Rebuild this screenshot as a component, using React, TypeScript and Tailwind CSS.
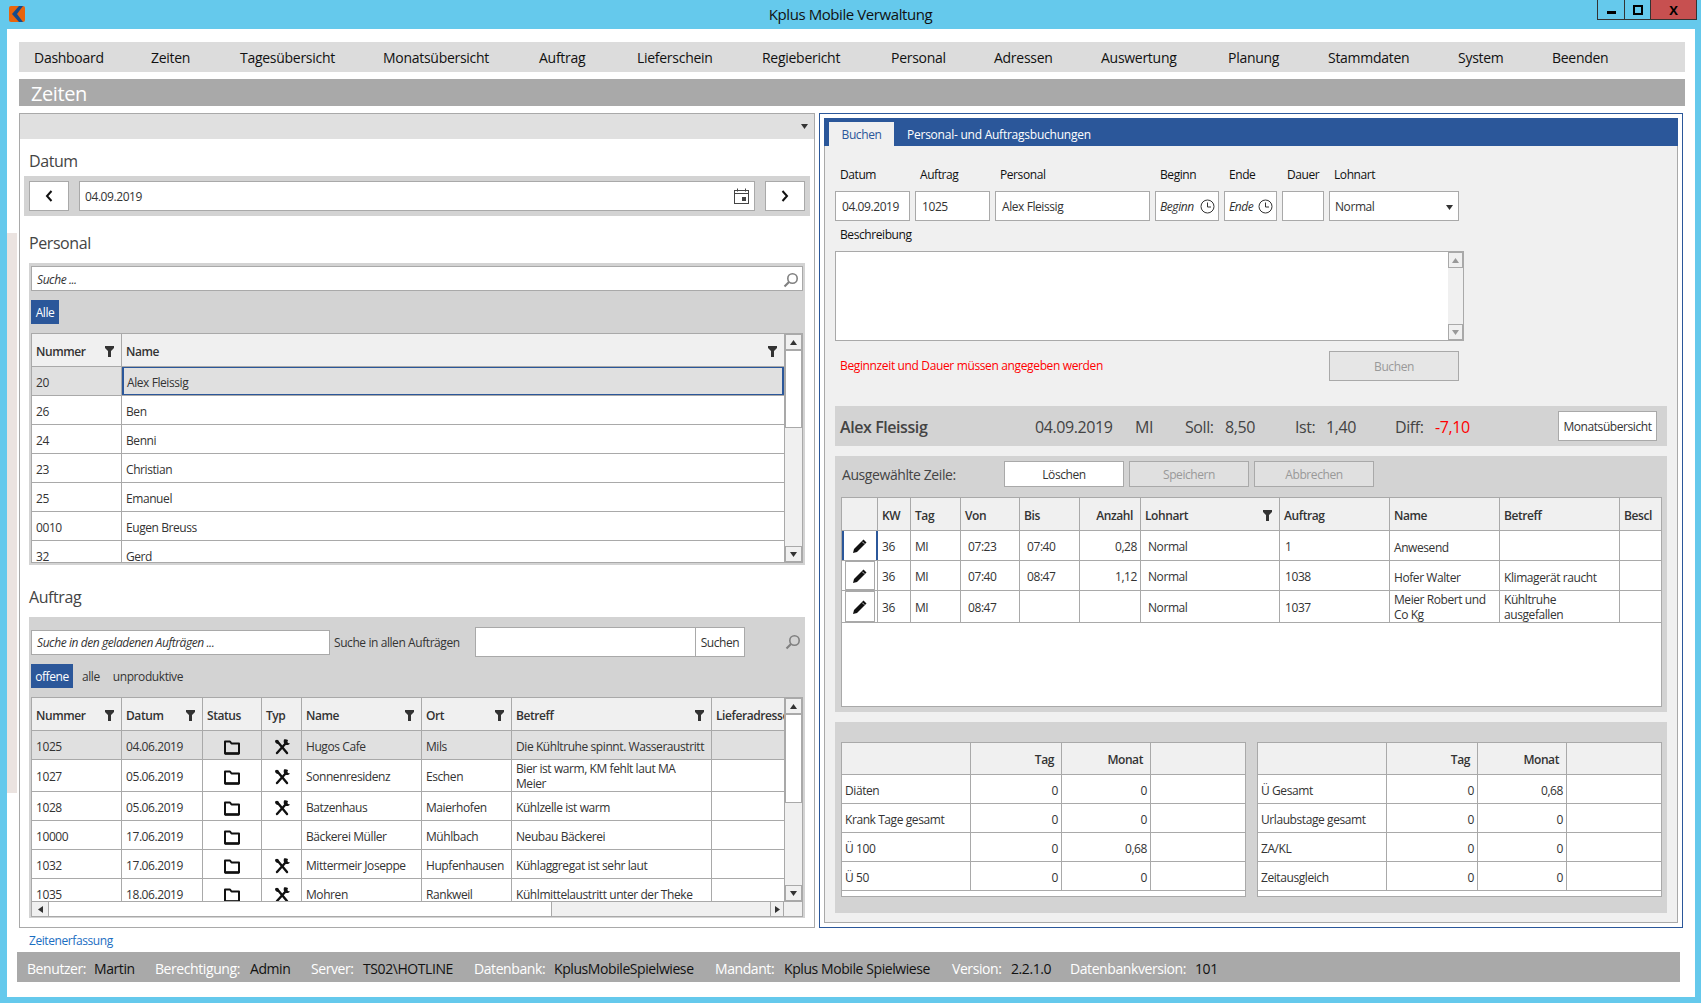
import React from 'react';

const FilterIcon = () => (
  <svg width="9" height="11" viewBox="0 0 9 11" className="shrink-0 text-[#333]">
    <path d="M0 0h9v2L6 5v6H3V5L0 2z" fill="currentColor" />
  </svg>
);

const FolderIcon = () => (
  <svg width="18" height="16" viewBox="0 0 18 16" fill="none">
    <path d="M2 14.5V2.500h5l1.500 2H16v10z" stroke="#111" strokeWidth="2" strokeLinejoin="round" />
    <path d="M2 14.500h14" stroke="#111" strokeWidth="2.400" />
  </svg>
);

const ToolsIcon = () => (
  <svg width="18" height="18" viewBox="0 0 18 18" fill="none">
    <path d="M4 3l10 12" stroke="#111" strokeWidth="2.400" strokeLinecap="round" />
    <path d="M2.500 2l3 .5.5 3-2 .5-2-2z" fill="#111" />
    <path d="M13 5L4 15" stroke="#111" strokeWidth="2.400" strokeLinecap="round" />
    <path d="M11 1.500c-.7 2-.3 3.700 1 5 1.700 1 3.500.7 5-1l-2-.5-.6-.9.6-2.100c-1.500-.7-2.800-1.100-4-.5z" fill="#111" />
  </svg>
);

const PencilIcon = () => (
  <svg width="16" height="16" viewBox="0 0 16 16">
    <path d="M11.500 1.500l3 3L5 14l-4 1 1-4z" fill="#111" />
    <path d="M10.300 3.700l2 2" stroke="#fff" strokeWidth="0.800" />
  </svg>
);

const SearchIcon = () => (
  <svg width="16" height="16" viewBox="0 0 16 16" fill="none" stroke="#808080">
    <circle cx="9.500" cy="6.500" r="4.700" strokeWidth="1.600" />
    <path d="M6 10l-4.500 4.500" strokeWidth="2.200" />
  </svg>
);

const ClockIcon = () => (
  <svg width="15" height="15" viewBox="0 0 15 15" fill="none" stroke="#333" className="shrink-0 -mt-[2px]">
    <circle cx="7.500" cy="7.500" r="6.500" />
    <path d="M7.500 3.500v4.500h3.500" />
  </svg>
);

const CalendarIcon = () => (
  <svg width="15" height="16" viewBox="0 0 15 16" fill="none" stroke="#444" className="-mt-[2px]">
    <rect x="0.500" y="2.500" width="14" height="13" />
    <path d="M0.500 5.500h14M3.500 0.500v3M11.500 0.500v3" />
    <rect x="8" y="9" width="4" height="4" fill="#444" stroke="none" />
  </svg>
);

const Chevron = ({ left }: { left?: boolean }) => (
  <svg width="8" height="12" viewBox="0 0 8 12" fill="none" stroke="#111" strokeWidth="2" className="-mt-[2px]">
    <path d={left ? 'M6.500 1L2 6l4.500 5' : 'M1.500 1L6 6l-4.500 5'} />
  </svg>
);

const Logo = () => (
  <svg width="16" height="16" viewBox="0 0 16 16">
    <rect width="16" height="16" rx="2" fill="#e8640c" />
    <path d="M10 0h4L8 8l6 8h-4L3 8z" fill="#144b8c" />
  </svg>
);

const Arrow = ({ dir, color = '#333' }: { dir: 'up' | 'down' | 'left' | 'right'; color?: string }) => {
  const d = { up: 'M3.500 1L7 6H0z', down: 'M3.500 6L7 1H0z', left: 'M1 3.500L6 0v7z', right: 'M6 3.500L1 0v7z' }[dir];
  return (
    <svg width="7" height="7" viewBox="0 0 7 7">
      <path d={d} fill={color} />
    </svg>
  );
};

const ScrollBtn = ({ dir, color }: { dir: 'up' | 'down' | 'left' | 'right'; color?: string }) => (
  <div className="flex items-center justify-center bg-[#f0f0f0] border border-[#a9a9a9] w-full h-[16px] shrink-0">
    <Arrow dir={dir} color={color} />
  </div>
);

// vertical scrollbar, the thumb sits after a fixed spacer
const VScroll = ({ thumb }: { thumb: string }) => (
  <div className="w-[18px] shrink-0 flex flex-col bg-[#f0f0f0] border-l border-[#a9a9a9]">
    <ScrollBtn dir="up" />
    <div className={`${thumb} bg-white border border-[#a9a9a9] shrink-0`} />
    <div className="flex-1" />
    <ScrollBtn dir="down" />
  </div>
);

type HeadCell = { t: string; filter?: boolean; right?: boolean };

const GridHead = ({ cols, head, h }: { cols: string; head: HeadCell[]; h: string }) => (
  <div className={`grid ${cols} ${h} shrink-0 bg-[#f0f0f0] border-b border-[#a9a9a9] font-semibold text-[#333]`}>
    {head.map((c, i) => (
      <div
        key={i}
        className={`flex items-center overflow-hidden whitespace-nowrap border-r border-[#a9a9a9] last:border-r-0 pl-[4px] pr-[7px] pt-[3px] ${c.right ? 'justify-end' : 'justify-between'}`}
      >
        <span>{c.t}</span>
        {c.filter && <FilterIcon />}
      </div>
    ))}
  </div>
);

const Input = ({ className = '', children }: { className?: string; children?: React.ReactNode }) => (
  <div className={`bg-white border border-[#a9a9a9] flex items-center pt-[2px] ${className}`}>{children}</div>
);

const Btn = ({ className, children }: { className: string; children: React.ReactNode }) => (
  <div className={`border border-[#a9a9a9] flex items-center justify-center pt-[2px] ${className}`}>{children}</div>
);

// flush: no text offset, for cells that hold two lines
const Cell = ({ className = '', flush, children }: { className?: string; flush?: boolean; children?: React.ReactNode }) => (
  <div className={`flex items-center border-r border-[#a9a9a9] last:border-r-0 overflow-hidden ${flush ? '' : 'pt-[3px]'} ${className}`}>{children}</div>
);

const menu = ['Dashboard', 'Zeiten', 'Tagesübersicht', 'Monatsübersicht', 'Auftrag', 'Lieferschein', 'Regiebericht', 'Personal', 'Adressen', 'Auswertung', 'Planung', 'Stammdaten', 'System', 'Beenden'];

const personal = [
  ['20', 'Alex Fleissig'],
  ['26', 'Ben'],
  ['24', 'Benni'],
  ['23', 'Christian'],
  ['25', 'Emanuel'],
  ['0010', 'Eugen Breuss'],
  ['32', 'Gerd'],
];

const auftraege = [
  { nr: '1025', d: '04.06.2019', tool: true, name: 'Hugos Cafe', ort: 'Mils', b: 'Die Kühltruhe spinnt. Wasseraustritt', h: 'h-[29px]' },
  { nr: '1027', d: '05.06.2019', tool: true, name: 'Sonnenresidenz', ort: 'Eschen', b: 'Bier ist warm, KM fehlt laut MA\nMeier', h: 'h-[32px]' },
  { nr: '1028', d: '05.06.2019', tool: true, name: 'Batzenhaus', ort: 'Maierhofen', b: 'Kühlzelle ist warm', h: 'h-[29px]' },
  { nr: '10000', d: '17.06.2019', tool: false, name: 'Bäckerei Müller', ort: 'Mühlbach', b: 'Neubau Bäckerei', h: 'h-[29px]' },
  { nr: '1032', d: '17.06.2019', tool: true, name: 'Mittermeir Joseppe', ort: 'Hupfenhausen', b: 'Kühlaggregat ist sehr laut', h: 'h-[29px]' },
  { nr: '1035', d: '18.06.2019', tool: true, name: 'Mohren', ort: 'Rankweil', b: 'Kühlmittelaustritt unter der Theke', h: 'h-[29px]' },
];

const buchungen = [
  { von: '07:23', bis: '07:40', anz: '0,28', a: '1', name: 'Anwesend', b: '', h: 'h-[30px]' },
  { von: '07:40', bis: '08:47', anz: '1,12', a: '1038', name: 'Hofer Walter', b: 'Klimagerät raucht', h: 'h-[30px]' },
  { von: '08:47', bis: '', anz: '', a: '1037', name: 'Meier Robert und Co Kg', b: 'Kühltruhe ausgefallen', h: 'h-[32px]' },
];

const statsLeft = [['Diäten', '0', '0'], ['Krank Tage gesamt', '0', '0'], ['Ü 100', '0', '0,68'], ['Ü 50', '0', '0']];
const statsRight = [['Ü Gesamt', '0', '0,68'], ['Urlaubstage gesamt', '0', '0'], ['ZA/KL', '0', '0'], ['Zeitausgleich', '0', '0']];

const status = [
  ['Benutzer:', 'Martin'],
  ['Berechtigung:', 'Admin'],
  ['Server:', 'TS02\\HOTLINE'],
  ['Datenbank:', 'KplusMobileSpielwiese'],
  ['Mandant:', 'Kplus Mobile Spielwiese'],
  ['Version:', '2.2.1.0'],
  ['Datenbankversion:', '101'],
];

const StatsTable = ({ rows }: { rows: string[][] }) => {
  const cols = 'grid-cols-[129px_91px_89px_1fr]';
  return (
    <div className="w-[405px] h-[155px] bg-white border border-[#a9a9a9] flex flex-col">
      <GridHead
        cols={cols}
        h="h-[32px]"
        head={[{ t: '' }, { t: 'Tag', right: true }, { t: 'Monat', right: true }, { t: '' }]}
      />
      {rows.map((r) => (
        <div key={r[0]} className={`grid ${cols} h-[29px] shrink-0 border-b border-[#a9a9a9]`}>
          <Cell className="pl-[3px]">{r[0]}</Cell>
          <Cell className="justify-end pr-[3px]">{r[1]}</Cell>
          <Cell className="justify-end pr-[3px]">{r[2]}</Cell>
          <Cell />
        </div>
      ))}
    </div>
  );
};

const PersonalGrid = () => {
  const cols = 'grid-cols-[90px_1fr]';
  return (
    <div className="h-[230px] bg-white border border-[#a9a9a9] flex">
      <div className="flex-1 min-w-0 overflow-hidden flex flex-col">
        <GridHead cols={cols} h="h-[33px]" head={[{ t: 'Nummer', filter: true }, { t: 'Name', filter: true }]} />
        {personal.map((p, i) => (
          <div key={p[0]} className={`grid ${cols} h-[29px] shrink-0 border-b border-[#a9a9a9] ${i === 0 ? 'bg-[#e0e0e0]' : ''}`}>
            <Cell className="pl-[4px]">{p[0]}</Cell>
            {i === 0 ? (
              <div className="flex items-center pl-[3px] pt-[3px] border-x-2 border-y border-[#2b579a]">{p[1]}</div>
            ) : (
              <Cell className="pl-[4px]">{p[1]}</Cell>
            )}
          </div>
        ))}
      </div>
      <VScroll thumb="h-[78px]" />
    </div>
  );
};

const AuftragGrid = () => {
  const cols = 'grid-cols-[90px_81px_59px_40px_120px_90px_200px_1fr]';
  return (
    <div className="h-[220px] bg-white border border-[#a9a9a9] flex flex-col">
      <div className="flex h-[203px] shrink-0">
        <div className="flex-1 min-w-0 overflow-hidden flex flex-col">
          <GridHead
            cols={cols}
            h="h-[33px]"
            head={[
              { t: 'Nummer', filter: true },
              { t: 'Datum', filter: true },
              { t: 'Status' },
              { t: 'Typ' },
              { t: 'Name', filter: true },
              { t: 'Ort', filter: true },
              { t: 'Betreff', filter: true },
              { t: 'Lieferadresse' },
            ]}
          />
          {auftraege.map((a, i) => (
            <div key={a.nr} className={`grid ${cols} ${a.h} shrink-0 border-b border-[#a9a9a9] ${i === 0 ? 'bg-[#e0e0e0]' : ''}`}>
              <Cell className="pl-[4px]">{a.nr}</Cell>
              <Cell className="pl-[4px]">{a.d}</Cell>
              <Cell className="justify-center"><FolderIcon /></Cell>
              <Cell className="justify-center">{a.tool && <ToolsIcon />}</Cell>
              <Cell className="pl-[4px] whitespace-nowrap">{a.name}</Cell>
              <Cell className="pl-[4px] whitespace-nowrap">{a.ort}</Cell>
              <Cell flush={a.b.includes('\n')} className="pl-[4px] pr-[2px] leading-[15px] whitespace-pre-line">{a.b}</Cell>
              <Cell />
            </div>
          ))}
        </div>
        <VScroll thumb="h-[89px]" />
      </div>
      <div className="flex flex-1 border-t border-[#a9a9a9] bg-[#f0f0f0]">
        <div className="w-[17px] flex items-center justify-center border-r border-[#a9a9a9]"><Arrow dir="left" /></div>
        <div className="w-[503px] bg-white border-r border-[#a9a9a9]" />
        <div className="flex-1" />
        <div className="w-[14px] flex items-center justify-center border-x border-[#a9a9a9]"><Arrow dir="right" /></div>
        <div className="w-[18px]" />
      </div>
    </div>
  );
};

const BuchungGrid = () => {
  const cols = 'grid-cols-[36px_33px_50px_59px_60px_61px_139px_110px_110px_120px_1fr]';
  return (
    <div className="h-[210px] w-[821px] bg-white border border-[#a9a9a9] flex flex-col">
      <GridHead
        cols={cols}
        h="h-[33px]"
        head={[
          { t: '' },
          { t: 'KW' },
          { t: 'Tag' },
          { t: 'Von' },
          { t: 'Bis' },
          { t: 'Anzahl', right: true },
          { t: 'Lohnart', filter: true },
          { t: 'Auftrag' },
          { t: 'Name' },
          { t: 'Betreff' },
          { t: 'Bescl' },
        ]}
      />
      {buchungen.map((b, i) => (
        <div key={b.a} className={`grid ${cols} ${b.h} shrink-0 border-b border-[#a9a9a9]`}>
          {i === 0 ? (
            <div className="flex items-center justify-center border-x-2 border-[#2b579a]"><PencilIcon /></div>
          ) : (
            <Cell flush className="justify-center">
              <div className="w-[30px] h-full flex items-center justify-center border border-[#a9a9a9]"><PencilIcon /></div>
            </Cell>
          )}
          <Cell className="pl-[4px]">36</Cell>
          <Cell className="pl-[4px]">MI</Cell>
          <Cell className="pl-[7px]">{b.von}</Cell>
          <Cell className="pl-[7px]">{b.bis}</Cell>
          <Cell className="justify-end pr-[3px]">{b.anz}</Cell>
          <Cell className="pl-[7px]">Normal</Cell>
          <Cell className="pl-[5px]">{b.a}</Cell>
          <Cell flush={i === 2} className="pl-[4px] pr-[2px] leading-[15px]">{b.name}</Cell>
          <Cell flush={i === 2} className="pl-[4px] pr-[2px] leading-[15px]">{b.b}</Cell>
          <Cell />
        </div>
      ))}
    </div>
  );
};

export default function App() {
  return (
    <div className="relative w-[1701px] h-[1003px] overflow-hidden bg-[#65c9ec] flex flex-col font-['Open_Sans','Noto_Sans',sans-serif] text-[12px] leading-[16px] text-[#333] tracking-[-0.035em]">
      {/* title bar */}
      <div className="h-[29px] shrink-0 flex relative">
        <div className="pl-[9px] pt-[6px] w-[200px]"><Logo /></div>
        <div className="flex-1 text-center text-[15px] leading-[29px] text-[#111]">Kplus Mobile Verwaltung</div>
        <div className="w-[200px] flex justify-end pr-[4px]">
          <div className="flex h-[20px] border border-t-0 border-[#333]">
            <div className="w-[27px] flex items-end justify-center pb-[5px] border-r border-[#333]"><div className="w-[9px] h-[3px] bg-black" /></div>
            <div className="w-[26px] flex items-center justify-center border-r border-[#333]"><div className="w-[10px] h-[10px] border-2 border-black" /></div>
            <div className="w-[45px] bg-[#c75050] flex items-center justify-center text-[13px] font-bold text-black">X</div>
          </div>
        </div>
      </div>

      <div className="relative ml-[7px] w-[1688px] h-[968px] bg-white pl-[10px] pt-[13px] flex flex-col">
        {/* Rest vom Hintergrundbild */}
        <div className="absolute left-0 top-[204px] w-[10px] h-[560px] bg-[#ebe3e0]" />

        <div className="ml-[2px] w-[1666px] h-[30px] shrink-0 bg-[#dcdcdc] grid grid-cols-[117px_89px_143px_156px_98px_125px_129px_103px_107px_127px_100px_130px_94px_1fr] items-center pl-[15px] pt-[2px] text-[14px] font-medium text-[#111] tracking-[-0.02em]">
          {menu.map((m) => <span key={m}>{m}</span>)}
        </div>
        <div className="ml-[2px] mt-[7px] w-[1666px] h-[27px] shrink-0 bg-[#a9a9a9] pl-[12px] text-[20px] leading-[30px] text-white">Zeiten</div>

        <div className="ml-[2px] mt-[7px] h-[815px] shrink-0 flex gap-[4px]">
          {/* left panel */}
          <div className="w-[796px] border border-[#a9a9a9] flex flex-col">
            <div className="h-[25px] shrink-0 bg-[#e0e0e0] flex items-center justify-end pr-[6px]"><Arrow dir="down" /></div>
            <div className="h-[37px] shrink-0 pt-[12px] pl-[9px] text-[16px] leading-[20px] text-[#444]">Datum</div>
            <div className="ml-[4px] w-[786px] h-[40px] shrink-0 bg-[#d3d3d3] flex items-center pl-[5px] gap-[10px]">
              <Btn className="w-[40px] h-[30px] bg-white"><Chevron left /></Btn>
              <Input className="w-[676px] h-[30px] pl-[5px] pr-[5px] justify-between">
                <span>04.09.2019</span>
                <CalendarIcon />
              </Input>
              <Btn className="w-[40px] h-[30px] bg-white"><Chevron /></Btn>
            </div>
            <div className="h-[47px] shrink-0 pt-[17px] pl-[9px] text-[16px] leading-[20px] text-[#444]">Personal</div>
            <div className="ml-[9px] w-[776px] h-[302px] shrink-0 bg-[#d3d3d3] px-[2px] pt-[3px] flex flex-col">
              <Input className="h-[25px] pl-[5px] pr-[3px] justify-between italic"><span>Suche ...</span><SearchIcon /></Input>
              <div className="mt-[9px] w-[28px] h-[24px] bg-[#2b579a] text-white flex items-center justify-center pt-[2px]">Alle</div>
              <div className="mt-[9px]"><PersonalGrid /></div>
            </div>
            <div className="h-[52px] shrink-0 pt-[22px] pl-[9px] text-[16px] leading-[20px] text-[#444]">Auftrag</div>
            <div className="ml-[9px] w-[776px] h-[301px] shrink-0 bg-[#d3d3d3] px-[2px] pt-[10px] flex flex-col">
              <div className="h-[30px] flex items-center">
                <Input className="w-[299px] h-[25px] pl-[5px] italic">Suche in den geladenen Aufträgen ...</Input>
                <span className="w-[145px] pl-[4px] pt-[2px] whitespace-nowrap">Suche in allen Aufträgen</span>
                <Input className="w-[221px] h-[30px]" />
                <Btn className="w-[49px] h-[30px] bg-white border-l-0">Suchen</Btn>
                <div className="ml-[40px]"><SearchIcon /></div>
              </div>
              <div className="mt-[7px] h-[24px] flex items-center pt-[2px]">
                <div className="w-[42px] h-[24px] -mt-[2px] bg-[#2b579a] text-white flex items-center justify-center pt-[2px]">offene</div>
                <span className="ml-[9px]">alle</span>
                <span className="ml-[13px]">unproduktive</span>
              </div>
              <div className="mt-[9px]"><AuftragGrid /></div>
            </div>
          </div>

          {/* right panel */}
          <div className="w-[864px] border border-[#2b579a] p-[4px]">
            <div className="h-full bg-[#f0f0f0] border-x border-b border-[#a9a9a9] flex flex-col">
              <div className="-mx-px h-[28px] shrink-0 bg-[#2b579a] flex items-end pl-[5px]">
                <div className="w-[65px] h-[24px] bg-[#f0f0f0] text-[#2b579a] flex items-center justify-center pt-[1px]">Buchen</div>
                <div className="ml-[13px] h-[24px] flex items-center pt-[1px] text-white tracking-[-0.02em]">Personal- und Auftragsbuchungen</div>
              </div>
              <div className="px-[10px] flex flex-col">
                <div className="pt-[19px] grid grid-cols-[75px_75px_155px_64px_53px_42px_130px] gap-x-[5px] text-[#111] leading-[20px] pb-[6px]">
                  {['Datum', 'Auftrag', 'Personal', 'Beginn', 'Ende', 'Dauer', 'Lohnart'].map((l) => (
                    <div key={l} className="pl-[5px]">{l}</div>
                  ))}
                </div>
                <div className="grid grid-cols-[75px_75px_155px_64px_53px_42px_130px] gap-x-[5px] h-[30px]">
                  <Input className="pl-[6px]">04.09.2019</Input>
                  <Input className="pl-[6px]">1025</Input>
                  <Input className="pl-[6px]">Alex Fleissig</Input>
                  <Input className="pl-[4px] pr-[3px] justify-between italic"><span>Beginn</span><ClockIcon /></Input>
                  <Input className="pl-[4px] pr-[3px] justify-between italic"><span>Ende</span><ClockIcon /></Input>
                  <Input />
                  <Input className="pl-[5px] pr-[5px] justify-between"><span>Normal</span><Arrow dir="down" /></Input>
                </div>
                <div className="h-[30px] pt-[4px] pl-[5px] leading-[20px] text-[#111]">Beschreibung</div>
                <div className="w-[629px] h-[90px] bg-white border border-[#a9a9a9] flex justify-end">
                  <div className="w-[15px] flex flex-col bg-[#f0f0f0]">
                    <ScrollBtn dir="up" color="#999" />
                    <div className="flex-1" />
                    <ScrollBtn dir="down" color="#999" />
                  </div>
                </div>
                <div className="mt-[10px] w-[624px] h-[30px] flex items-center justify-between pl-[5px]">
                  <span className="text-[#ff0000] tracking-[-0.03em]">Beginnzeit und Dauer müssen angegeben werden</span>
                  <Btn className="w-[130px] h-[30px] bg-[#e6e6e6] text-[#999]">Buchen</Btn>
                </div>

                <div className="mt-[25px] w-[832px] h-[40px] bg-[#d3d3d3] pl-[5px] pr-[10px] grid grid-cols-[195px_100px_50px_40px_70px_31px_69px_40px_1fr] items-center text-[16px] text-[#444]">
                  <span className="font-semibold pt-[2px]">Alex Fleissig</span>
                  <span className="pt-[2px]">04.09.2019</span>
                  <span className="pt-[2px]">MI</span>
                  <span className="pt-[2px]">Soll:</span>
                  <span className="pt-[2px]">8,50</span>
                  <span className="pt-[2px]">Ist:</span>
                  <span className="pt-[2px]">1,40</span>
                  <span className="pt-[2px]">Diff:</span>
                  <div className="flex items-center justify-between">
                    <span className="text-[#ff0000] pt-[2px]">-7,10</span>
                    <Btn className="w-[99px] h-[30px] bg-white text-[12px] text-[#333]">Monatsübersicht</Btn>
                  </div>
                </div>

                <div className="mt-[10px] w-[832px] h-[256px] bg-[#d3d3d3] pt-[5px] pl-[6px] flex flex-col">
                  <div className="flex items-center h-[26px]">
                    <span className="w-[163px] pl-[1px] pt-[2px] text-[14px] text-[#444]">Ausgewählte Zeile:</span>
                    <div className="flex gap-[5px]">
                      <Btn className="w-[120px] h-[26px] bg-white">Löschen</Btn>
                      <Btn className="w-[120px] h-[26px] bg-[#e0e0e0] text-[#999]">Speichern</Btn>
                      <Btn className="w-[120px] h-[26px] bg-[#e0e0e0] text-[#999]">Abbrechen</Btn>
                    </div>
                  </div>
                  <div className="mt-[10px]"><BuchungGrid /></div>
                </div>

                <div className="mt-[10px] w-[832px] h-[191px] bg-[#d3d3d3] pt-[20px] pl-[6px] flex gap-[11px]">
                  <StatsTable rows={statsLeft} />
                  <StatsTable rows={statsRight} />
                </div>
              </div>
            </div>
          </div>
        </div>

        <div className="ml-[2px] h-[24px] shrink-0 pl-[10px] pt-[2px] flex items-center text-[#1b6ec2]">Zeitenerfassung</div>

        <div className="w-[1663px] h-[30px] shrink-0 bg-[#a9a9a9] pl-[10px] pt-[3px] grid grid-cols-[67px_61px_95px_61px_52px_111px_80px_161px_69px_168px_59px_59px_125px_1fr] items-center text-[14px] whitespace-nowrap">
          {status.flat().map((s, i) => (
            <span key={i} className={i % 2 === 0 ? 'text-white' : 'text-[#111]'}>{s}</span>
          ))}
        </div>
      </div>
    </div>
  );
}
